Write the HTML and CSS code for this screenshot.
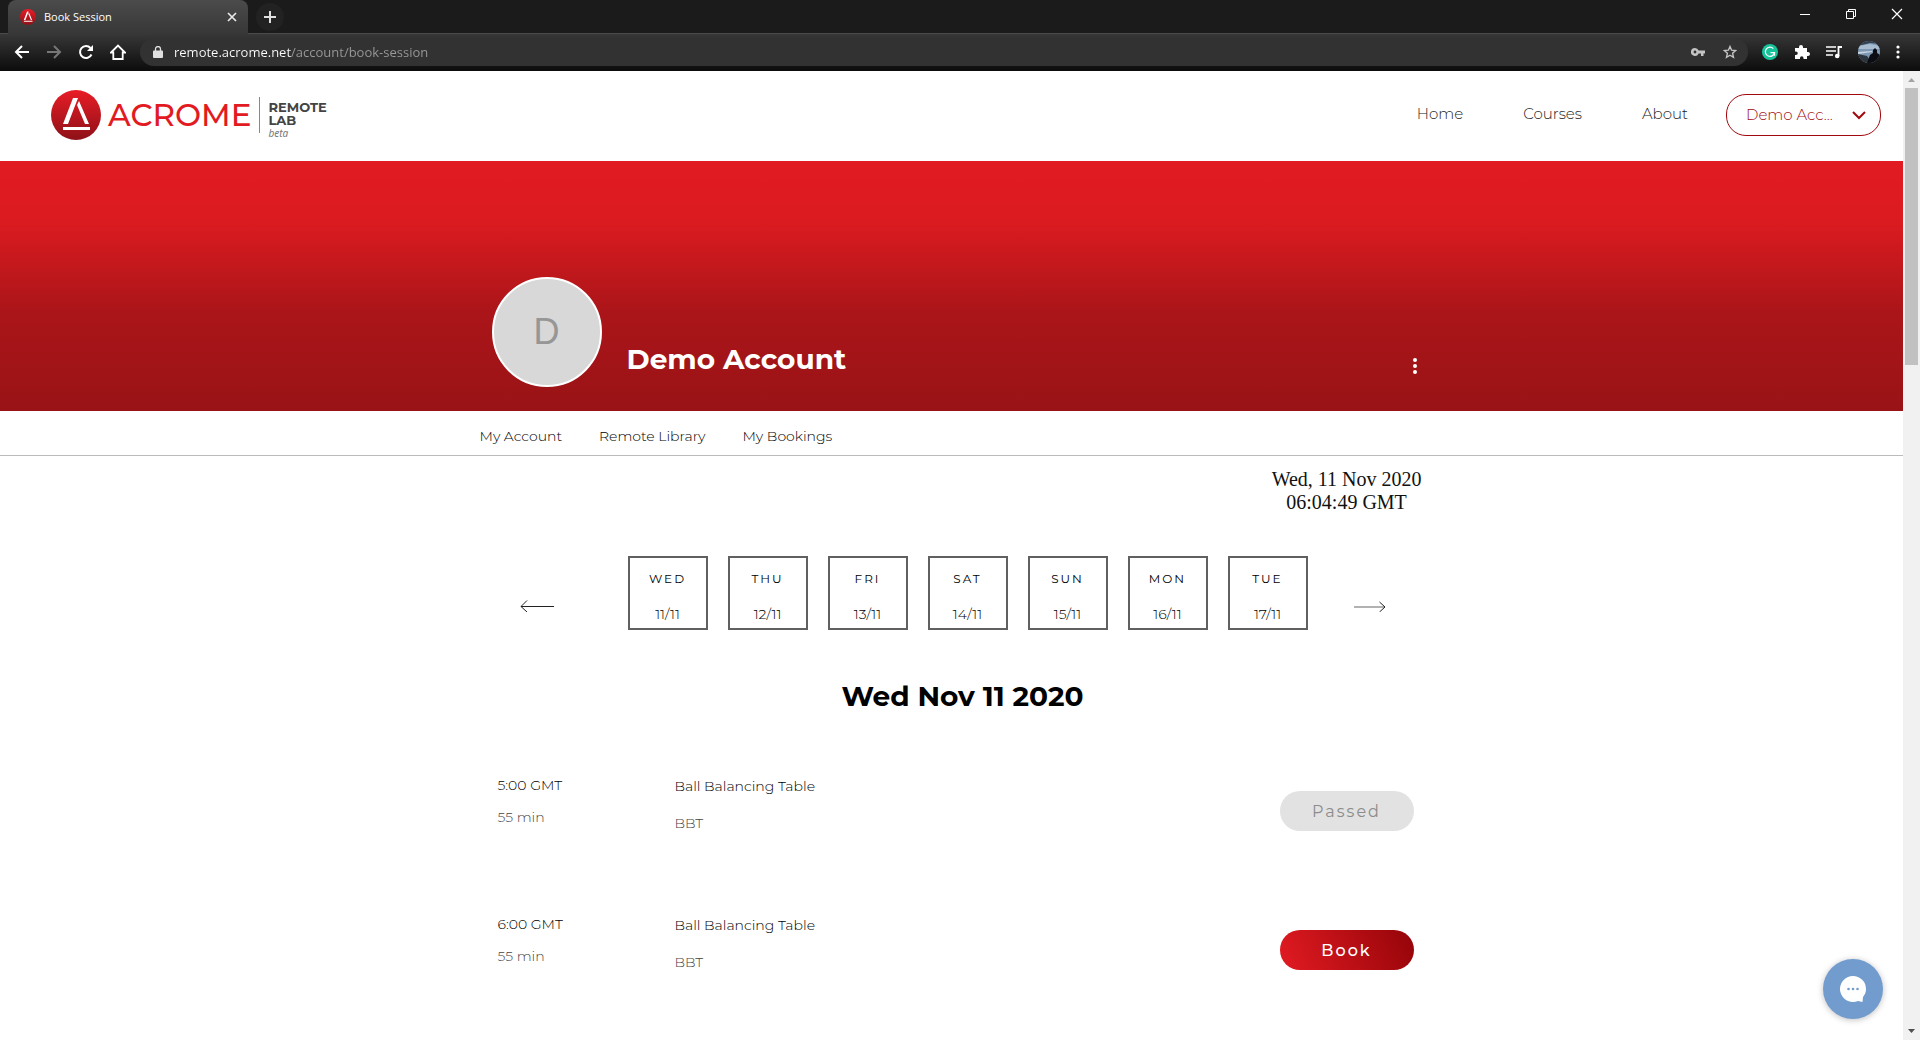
FILE: index.html
```html
<!DOCTYPE html>
<html lang="en">
<head>
<meta charset="utf-8">
<meta name="viewport" content="width=device-width, initial-scale=1">
<title>Book Session</title>
<link rel="stylesheet" href="styles.css">
</head>
<body>
<svg class="defs" aria-hidden="true">
  <defs>
    <linearGradient id="logo-red" x1="0" y1="0" x2="0" y2="1">
      <stop offset="0" stop-color="#e81c26"/>
      <stop offset="1" stop-color="#8e1118"/>
    </linearGradient>
    <symbol id="acrome-mark" viewBox="0 0 50 50">
      <circle cx="25" cy="25" r="25" fill="url(#logo-red)"/>
      <path d="M22 8h5L17 34h-5zM26 15l2-4 10 23h-4zM12 37h27v3H12z" fill="#fff"/>
    </symbol>
  </defs>
</svg>

<header class="browser">
  <div class="tabstrip">
    <div class="tab">
      <svg class="tab-icon" aria-hidden="true"><use href="#acrome-mark"/></svg>
      <span class="tab-title">Book Session</span>
      <button class="tab-close" aria-label="Close tab"><svg width="10" height="10" viewBox="0 0 10 10"><path d="M1 1l8 8M9 1l-8 8" stroke="#e8e8e8" stroke-width="1.700"/></svg></button>
    </div>
    <button class="tab-new" aria-label="New tab"><svg width="12" height="12" viewBox="0 0 12 12"><path d="M6 0v12M0 6h12" stroke="#e0e0e0" stroke-width="2"/></svg></button>
    <div class="window-controls">
      <button aria-label="Minimize"><svg width="12" height="12" viewBox="0 0 12 12"><path d="M1 6.500h10" stroke="#fff"/></svg></button>
      <button aria-label="Restore"><svg width="12" height="12" viewBox="0 0 12 12" fill="none" stroke="#fff"><path d="M1.500 3.500h7v7h-7zM3.500 3.500v-2h7v7h-2"/></svg></button>
      <button aria-label="Close"><svg width="12" height="12" viewBox="0 0 12 12"><path d="M1 1l10 10M11 1L1 11" stroke="#fff" stroke-width="1.200"/></svg></button>
    </div>
  </div>
  <div class="toolbar">
    <div class="toolbar-nav">
      <button aria-label="Back"><svg width="16" height="16" viewBox="0 0 16 16" fill="none" stroke="#fff" stroke-width="2"><path d="M15 8H2M8 2L2 8l6 6"/></svg></button>
      <button aria-label="Forward"><svg width="16" height="16" viewBox="0 0 16 16" fill="none" stroke="#777" stroke-width="2"><path d="M1 8h13M8 2l6 6-6 6"/></svg></button>
      <button aria-label="Reload"><svg width="16" height="16" viewBox="0 0 16 16"><path d="M13.500 10.500A6 6 0 1 1 12.500 4" fill="none" stroke="#fff" stroke-width="2"/><path d="M15 1v6H9z" fill="#fff"/></svg></button>
      <button aria-label="Home"><svg width="16" height="16" viewBox="0 0 16 16"><path d="M1 8.500L8 1.500l7 7H12.700V15H3.300V8.500z" fill="none" stroke="#fff" stroke-width="1.800"/></svg></button>
    </div>
    <div class="omnibox">
      <svg width="10" height="12" viewBox="0 0 10 12" aria-hidden="true"><path d="M1 4.500h8a1 1 0 0 1 1 1V11a1 1 0 0 1-1 1H1a1 1 0 0 1-1-1V5.500a1 1 0 0 1 1-1z" fill="#e0e0e0"/><path d="M2.500 5V3a2.500 2.500 0 0 1 5 0v2" fill="none" stroke="#e0e0e0" stroke-width="1.300"/></svg>
      <input class="url" type="text" aria-label="Address" value="remote.acrome.net/account/book-session">
      <button aria-label="Saved passwords"><svg width="14" height="10" viewBox="0 0 14 10"><path d="M4 1a4 4 0 1 0 3.600 5.500H10V9h2.500V6.500H14v-3H7.600A4 4 0 0 0 4 1zm0 2.600a1.400 1.400 0 1 1 0 2.800 1.400 1.400 0 0 1 0-2.800z" fill="#c4c4c4"/></svg></button>
      <button aria-label="Bookmark this page"><svg width="14" height="14" viewBox="0 0 14 14"><path d="M7 1.500l1.600 3.700 4 .4-3 2.700.9 4L7 10.200l-3.500 2.100.9-4-3-2.700 4-.4z" fill="none" stroke="#c4c4c4" stroke-width="1.400"/></svg></button>
    </div>
    <div class="toolbar-ext">
      <button aria-label="Grammar checker"><svg width="16" height="16" viewBox="0 0 16 16"><circle cx="8" cy="8" r="8" fill="#15c39a"/><path d="M11.300 4.600A4.600 4.600 0 1 0 12.500 8.700H8.500M12.500 8.700v3" fill="none" stroke="#fff" stroke-width="1.200"/></svg></button>
      <button aria-label="Extensions"><svg width="16" height="16" viewBox="0 0 16 16"><path d="M1 4h4V3a2 2 0 0 1 4 0v1h4v4h1a2 2 0 0 1 0 4h-1v3H9.500v-1a1.700 1.700 0 0 0-3.500 0v1H1v-4h1a1.700 1.700 0 0 0 0-3.500H1z" fill="#fff"/></svg></button>
      <button aria-label="Media control"><svg width="16" height="14" viewBox="0 0 16 14"><path d="M0 2h10M0 6h10M0 10h7" stroke="#fff" stroke-width="1.600"/><path d="M12.500 11V2H16" fill="none" stroke="#fff" stroke-width="1.800"/><circle cx="11.200" cy="11" r="2.300" fill="#fff"/></svg></button>
      <button aria-label="Profile"><svg width="22" height="22" viewBox="0 0 22 22"><defs><clipPath id="pc"><circle cx="11" cy="11" r="11"/></clipPath></defs><g clip-path="url(#pc)"><path d="M0 0h22v22H0z" fill="#7d97b3"/><path d="M0 0h22v3L12 2 0 5z" fill="#33414f"/><path d="M0 5l12-2 10 2v3H0z" fill="#a9bdd0"/><path d="M0 11l14-1v1L0 13z" fill="#c9d4de"/><path d="M0 13l9 2 5 7H0z" fill="#2c343d"/><path d="M12 14l3-2V9l2-2 2 2v3l3 2v8H9z" fill="#0b0d12"/></g></svg></button>
      <button aria-label="Browser menu"><svg width="4" height="14" viewBox="0 0 4 14" fill="#fff"><circle cx="2" cy="2" r="1.600"/><circle cx="2" cy="7" r="1.600"/><circle cx="2" cy="12" r="1.600"/></svg></button>
    </div>
  </div>
</header>

<div class="viewport">
  <div class="page">
    <header class="site-header">
      <a class="logo" href="#" aria-label="Acrome Remote Lab">
        <svg class="logo-mark" aria-hidden="true"><use href="#acrome-mark"/></svg>
        <span class="logo-word">ACROME</span>
        <span class="logo-rule"></span>
        <span class="logo-sub"><b>REMOTE</b><b>LAB</b><i>beta</i></span>
      </a>
      <nav class="site-nav">
        <a href="#">Home</a>
        <a href="#">Courses</a>
        <a href="#">About</a>
      </nav>
      <button class="account" aria-haspopup="menu">
        <span>Demo Acc...</span>
        <svg width="14" height="9" viewBox="0 0 14 9"><path d="M1 1l6 6 6-6" fill="none" stroke="#a1090f" stroke-width="2"/></svg>
      </button>
    </header>

    <section class="banner">
      <div class="column profile">
        <div class="avatar">D</div>
        <h1>Demo Account</h1>
        <button class="more" aria-label="More actions"><svg width="4" height="16" viewBox="0 0 4 16" fill="#fff"><circle cx="2" cy="2" r="2"/><circle cx="2" cy="8" r="2"/><circle cx="2" cy="14" r="2"/></svg></button>
      </div>
    </section>

    <nav class="member-nav">
      <div class="column member-links">
        <a href="#">My Account</a>
        <a href="#">Remote Library</a>
        <a href="#">My Bookings</a>
      </div>
    </nav>

    <main class="column booking">
      <p class="clock">Wed, 11 Nov 2020<br>06:04:49 GMT</p>
      <div class="week">
        <button class="arrow" aria-label="Previous week"><svg width="34" height="12" viewBox="0 0 34 12"><path d="M34 6.500H1M7 .5l-6 6 6 5.500" fill="none" stroke="#222"/></svg></button>
        <div class="days">
          <button class="day"><b>WED</b><span>11/11</span></button>
          <button class="day"><b>THU</b><span>12/11</span></button>
          <button class="day"><b>FRI</b><span>13/11</span></button>
          <button class="day"><b>SAT</b><span>14/11</span></button>
          <button class="day"><b>SUN</b><span>15/11</span></button>
          <button class="day"><b>MON</b><span>16/11</span></button>
          <button class="day"><b>TUE</b><span>17/11</span></button>
        </div>
        <button class="arrow" aria-label="Next week"><svg width="32" height="12" viewBox="0 0 32 12"><path d="M0 7h31" stroke="#999" stroke-width="1.500"/><path d="M25.500 2l5.500 5-5.500 5" fill="none" stroke="#222"/></svg></button>
      </div>
      <h2>Wed Nov 11 2020</h2>
      <ul class="sessions">
        <li class="session">
          <div class="when"><span>5:00 GMT</span><small>55 min</small></div>
          <div class="what"><span>Ball Balancing Table</span><small>BBT</small></div>
          <button class="action" disabled>Passed</button>
        </li>
        <li class="session">
          <div class="when"><span>6:00 GMT</span><small>55 min</small></div>
          <div class="what"><span>Ball Balancing Table</span><small>BBT</small></div>
          <button class="action book">Book</button>
        </li>
      </ul>
    </main>
    <button class="chat" aria-label="Open chat"><svg width="26" height="26" viewBox="0 0 26 26"><path d="M13 0a13 13 0 0 1 13 13c0 3-1 5.500-3 8l-.5 5-4.500-1A13 13 0 1 1 13 0z" fill="#fff"/><circle cx="8.500" cy="13" r="1.300" fill="#729cce"/><circle cx="13" cy="13" r="1.300" fill="#729cce"/><circle cx="17.500" cy="13" r="1.300" fill="#729cce"/></svg></button>
  </div>
  <div class="scrollbar" aria-hidden="true">
    <svg width="17" height="17" viewBox="0 0 17 17"><path d="M5 11l3.500-4L12 11z" fill="#a3a3a3"/></svg>
    <div class="thumb"></div>
    <svg width="17" height="17" viewBox="0 0 17 17"><path d="M5 6l3.500 4L12 6z" fill="#505050"/></svg>
  </div>
</div>
</body>
</html>
```
FILE: styles.css
```css
* { box-sizing: border-box; }

body {
  margin: 0;
  min-height: 100vh;
  display: flex;
  flex-direction: column;
  background: #fff;
  color: #000;
  font-family: Montserrat, Inter, sans-serif;
  font-size: 14px;
  font-weight: 300;
  line-height: 20px;
}

button {
  padding: 0;
  border: 0;
  background: none;
  color: inherit;
  font: inherit;
}

a { color: inherit; text-decoration: none; }
svg { display: block; }
.defs { position: absolute; width: 0; height: 0; }

/* Browser frame */
.browser {
  background: #1b1b1b;
  color: #fff;
  font-family: "Segoe UI", "Open Sans", sans-serif;
  font-weight: 400;
}

.tabstrip {
  display: flex;
  align-items: flex-start;
  height: 34px;
  padding-left: 8px;
  border-bottom: 1px solid #4a4a4a;
}

.tab {
  display: flex;
  align-items: center;
  width: 240px;
  height: 34px;
  padding: 0 11px 0 12px;
  gap: 8px;
  border-radius: 8px 8px 0 0;
  background: linear-gradient(#4b4b4b, #373737);
  font-size: 11px;
}

.tab-icon { width: 16px; height: 16px; }
.tab-title { flex: 1; }

.tab-new {
  display: grid;
  place-items: center;
  width: 28px;
  height: 28px;
  margin: 3px 0 0 8px;
  border-radius: 50%;
  background: #222;
}

.window-controls {
  display: flex;
  margin-left: auto;
}

.window-controls button {
  display: grid;
  place-items: center;
  width: 46px;
  height: 28px;
}

.toolbar {
  display: flex;
  align-items: center;
  height: 37px;
  padding: 0 20px 2px 14px;
  background: linear-gradient(#373737, #0c0c0c);
}

.toolbar-nav { display: flex; gap: 16px; margin-right: 14px; }

.omnibox {
  flex: 1;
  display: flex;
  align-items: center;
  gap: 18px;
  height: 28px;
  padding: 0 11px 0 13px;
  border-radius: 14px;
  background: #323232;
}

.url {
  flex: 1;
  margin-left: -9px;
  padding: 0 2px;
  border: 0;
  background: linear-gradient(90deg, #fff 119px, #9a9a9a 119px);
  background-clip: text;
  color: transparent;
  font: inherit;
  font-size: 13px;
}

.toolbar-ext {
  display: flex;
  align-items: center;
  gap: 16px;
  margin-left: 14px;
}

/* Page frame */
.viewport { flex: 1; display: flex; }
.page { flex: 1; min-width: 0; }

.scrollbar {
  display: flex;
  flex-direction: column;
  justify-content: space-between;
  width: 17px;
  background: #f1f1f1;
}

.thumb {
  height: 277px;
  margin: 0 2px auto;
  background: #c1c1c1;
}

.column {
  width: 100%;
  max-width: 980px;
  margin: 0 auto;
}

/* Site header */
.site-header {
  display: flex;
  align-items: center;
  height: 90px;
  padding: 0 22px 2px 51px;
}

.logo { display: flex; align-items: center; margin-right: auto; }
.logo-mark { width: 50px; height: 50px; }

.logo-word {
  margin-left: 7px;
  color: #e21b23;
  font-size: 31px;
  font-weight: 500;
}

.logo-rule {
  width: 1px;
  height: 36px;
  margin: 0 8px;
  background: #888;
}

.logo-sub {
  display: flex;
  flex-direction: column;
  padding-top: 10px;
  color: #444;
  font-size: 13px;
  line-height: 13px;
}

.logo-sub b { font-weight: 700; }

.logo-sub i {
  color: #777;
  font-family: "Noto Sans", sans-serif;
  font-size: 10px;
  font-weight: 400;
}

.site-nav {
  display: flex;
  gap: 60px;
  margin-right: 38px;
  padding-bottom: 2px;
  color: #222;
  font-size: 15px;
}

.account {
  display: flex;
  align-items: center;
  justify-content: space-between;
  width: 155px;
  height: 42px;
  padding: 0 14px 0 19px;
  border: 1px solid #a1090f;
  border-radius: 20px;
  color: #a1090f;
  font-size: 15px;
}

/* Profile banner */
.banner {
  height: 250px;
  background: linear-gradient(#e21b22, #da1b20 25%, #ab1519 60%, #991316);
}

.profile {
  display: flex;
  align-items: flex-start;
  padding: 116px 25px 0 30px;
}

.avatar {
  display: grid;
  place-items: center;
  width: 110px;
  height: 110px;
  border: 2px solid #fff;
  border-radius: 50%;
  background: #d8d8d8;
  color: #969696;
  font-family: "Liberation Sans", sans-serif;
  font-size: 36px;
  font-weight: 400;
}

.profile h1 {
  margin: 66px auto 0 25px;
  color: #fff;
  font-size: 28px;
  font-weight: 700;
  line-height: 32px;
}

.more { margin-top: 81px; }

.member-nav { border-bottom: 1px solid #bbb; }

.member-links {
  display: flex;
  gap: 37px;
  padding: 15px 18px 9px;
}

/* Booking */
.booking { display: flex; flex-direction: column; }

.clock {
  align-self: flex-end;
  margin: 12px 20px 0;
  color: #111;
  font-family: "Times New Roman", "Liberation Serif", serif;
  font-size: 20px;
  font-weight: 400;
  line-height: 23px;
  text-align: center;
}

.week {
  display: flex;
  align-items: center;
  justify-content: space-between;
  margin: 42px 56px 0 58px;
}

.days { display: flex; gap: 20px; margin-left: 28px; }
.arrow { padding-top: 26px; }

.day {
  display: flex;
  flex-direction: column;
  align-items: center;
  gap: 15px;
  width: 80px;
  height: 74px;
  padding-top: 11px;
  border: 2px solid #606060;
}

.day b { font-size: 12px; font-weight: 400; letter-spacing: 2px; }

.booking h2 {
  margin: 49px 0 0;
  padding-left: 22px;
  font-size: 28px;
  font-weight: 700;
  line-height: 34px;
  text-align: center;
}

.sessions {
  display: flex;
  flex-direction: column;
  gap: 81px;
  margin: 62px 28px 0 36px;
  padding: 0;
  list-style: none;
}

.session { display: flex; align-items: flex-start; }
.when, .what { display: flex; flex-direction: column; }
.when { width: 177px; gap: 12px; }
.what { flex: 1; gap: 17px; padding-top: 1px; }
.session small { color: #444; font-size: 14px; }

.action {
  width: 134px;
  height: 40px;
  margin-top: 16px;
  padding-top: 1px;
  border-radius: 20px;
  background: #e2e2e2;
  color: #8c8c8c;
  font-size: 16px;
  font-weight: 400;
  letter-spacing: 2px;
}

.book {
  background: linear-gradient(65deg, #e21b22, #940409);
  color: #fff;
  font-weight: 500;
}

.chat {
  position: fixed;
  right: 37px;
  bottom: 21px;
  display: grid;
  place-items: center;
  width: 60px;
  height: 60px;
  border-radius: 50%;
  background: #729cce;
  box-shadow: 0 1px 6px rgba(0, 0, 0, .25);
}
```
